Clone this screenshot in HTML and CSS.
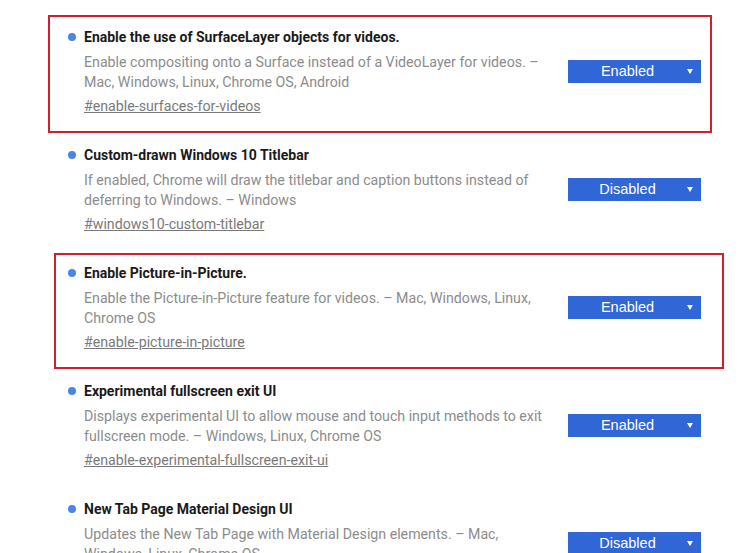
FILE: index.html
```html
<!DOCTYPE html>
<html>
<head>
<meta charset="utf-8">
<link rel="stylesheet" href="styles.css">
</head>
<body>
<div class="page">
  <div class="list">
    <div class="item">
      <div class="info">
        <div class="title"><span class="dot"></span>Enable the use of SurfaceLayer objects for videos.</div>
        <div class="desc">Enable compositing onto a Surface instead of a VideoLayer for videos. – Mac, Windows, Linux, Chrome OS, Android</div>
        <a class="link">#enable-surfaces-for-videos</a>
      </div>
      <div class="select"><span class="label">Enabled</span><span class="arrow"></span></div>
    </div>
    <div class="item">
      <div class="info">
        <div class="title"><span class="dot"></span>Custom-drawn Windows 10 Titlebar</div>
        <div class="desc">If enabled, Chrome will draw the titlebar and caption buttons instead of deferring to Windows. – Windows</div>
        <a class="link">#windows10-custom-titlebar</a>
      </div>
      <div class="select"><span class="label">Disabled</span><span class="arrow"></span></div>
    </div>
    <div class="item">
      <div class="info">
        <div class="title"><span class="dot"></span>Enable Picture-in-Picture.</div>
        <div class="desc">Enable the Picture-in-Picture feature for videos. – Mac, Windows, Linux, Chrome OS</div>
        <a class="link">#enable-picture-in-picture</a>
      </div>
      <div class="select"><span class="label">Enabled</span><span class="arrow"></span></div>
    </div>
    <div class="item">
      <div class="info">
        <div class="title"><span class="dot"></span>Experimental fullscreen exit UI</div>
        <div class="desc">Displays experimental UI to allow mouse and touch input methods to exit fullscreen mode. – Windows, Linux, Chrome OS</div>
        <a class="link">#enable-experimental-fullscreen-exit-ui</a>
      </div>
      <div class="select"><span class="label">Enabled</span><span class="arrow"></span></div>
    </div>
    <div class="item">
      <div class="info">
        <div class="title"><span class="dot"></span>New Tab Page Material Design UI</div>
        <div class="desc">Updates the New Tab Page with Material Design elements. – Mac, Windows, Linux, Chrome OS</div>
        <a class="link">#ntp-ui-md</a>
      </div>
      <div class="select"><span class="label">Disabled</span><span class="arrow"></span></div>
    </div>
  </div>
  <div class="mark mark-one"></div>
  <div class="mark mark-two"></div>
</div>
</body>
</html>
```
FILE: styles.css
```css
html, body {
  margin: 0;
  padding: 0;
  background: #ffffff;
  overflow: hidden;
}
.page {
  position: relative;
  width: 750px;
  height: 553px;
  overflow: hidden;
  font-family: Roboto, "Liberation Sans", sans-serif;
}
.list {
  display: flex;
  flex-direction: column;
  padding-top: 12px;
  padding-left: 84px;
}
.item {
  display: flex;
  align-items: center;
  padding: 15px 0;
  height: 88px;
}
.info {
  width: 470px;
  display: flex;
  flex-direction: column;
}
.title {
  position: relative;
  font-size: 14px;
  font-weight: bold;
  line-height: 20px;
  color: #1a1a1a;
  margin-bottom: 5px;
}
.dot {
  position: absolute;
  left: -16px;
  top: 6px;
  width: 8px;
  height: 8px;
  border-radius: 50%;
  background: #4a86e8;
}
.desc {
  font-size: 14.2px;
  line-height: 20px;
  color: #8c8c8c;
}
.link {
  margin-top: 4px;
  font-size: 14.2px;
  line-height: 20px;
  color: #7a7a7a;
  text-decoration: underline;
  align-self: flex-start;
}
.select {
  margin-left: 14px;
  width: 133px;
  height: 23px;
  background: #3166d6;
  display: flex;
  align-items: center;
  position: relative;
  flex-shrink: 0;
}
.label {
  flex: 1;
  text-align: center;
  padding-right: 14px;
  padding-left: 0;
  font-family: "Liberation Sans", Arial, sans-serif;
  font-size: 14.5px;
  color: #ffffff;
}
.arrow {
  position: absolute;
  right: 8px;
  top: 9px;
  width: 0;
  height: 0;
  border-left: 3px solid transparent;
  border-right: 3px solid transparent;
  border-top: 5px solid #ffffff;
}
.mark {
  position: absolute;
  border: 2px solid #d11f2e;
  box-sizing: border-box;
}
.mark-one {
  left: 48px;
  top: 15px;
  width: 664px;
  height: 118px;
}
.mark-two {
  left: 54px;
  top: 253px;
  width: 670px;
  height: 116px;
}
```
